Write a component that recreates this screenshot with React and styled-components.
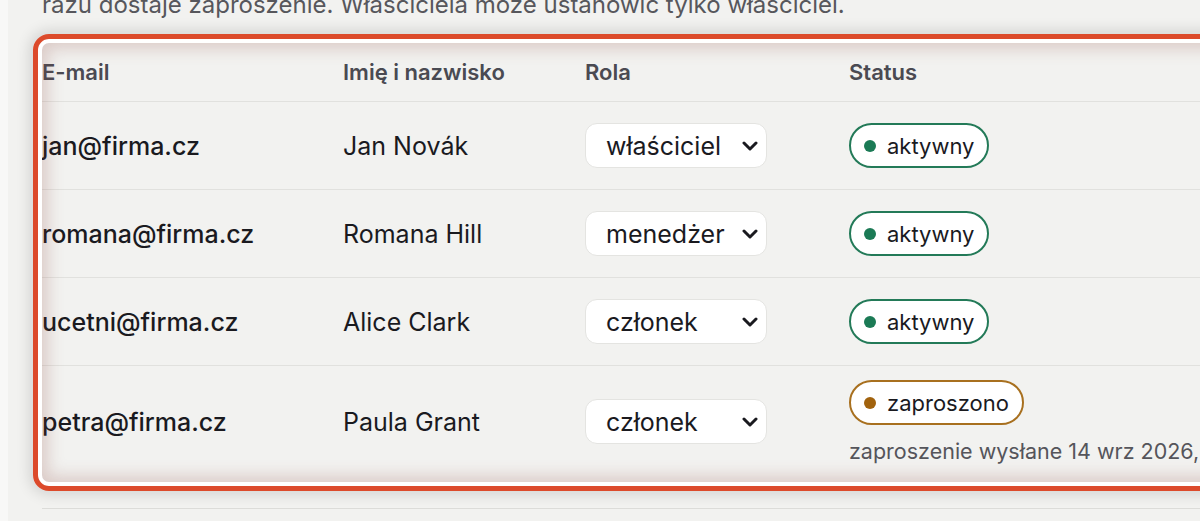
import React from "react";
import styled, { createGlobalStyle } from "styled-components";

const GlobalStyle = createGlobalStyle`
  * { box-sizing: border-box; }
  html, body { margin: 0; padding: 0; }
  body {
    background: #f8f8f7;
    font-family: Inter, "Noto Sans", "Liberation Sans", sans-serif;
    overflow: hidden;
  }
`;

const Page = styled.div`
  display: flex;
  height: 521px;
  padding-left: 8px;
`;

const Panel = styled.main`
  flex: 1;
  min-width: 0;
  background: #f2f2f0;
  padding-left: 34px;
  overflow: hidden;
`;

const Intro = styled.p`
  margin: -11px 0 0;
  font-size: 24px;
  line-height: 32px;
  color: #57575c;
  white-space: nowrap;
`;

const TableWrap = styled.div`
  position: relative;
  margin-top: 22px;
  width: 1250px;
`;

const Highlight = styled.div`
  position: absolute;
  top: -9px;
  left: -9px;
  right: -60px;
  bottom: -9px;
  border: 5px solid #dc4a2b;
  border-radius: 16px;
  pointer-events: none;
  box-shadow:
    inset 0 0 0 4px #ffffff,
    inset 0 0 16px 10px rgba(140, 70, 60, 0.22),
    0 0 14px 4px rgba(0, 0, 0, 0.12);
`;

const Table = styled.table`
  width: 100%;
  border-collapse: collapse;
  table-layout: fixed;
`;

const Th = styled.th`
  text-align: left;
  padding: 17px 0;
  font-size: 22px;
  line-height: 24px;
  font-weight: 600;
  color: #4a4a52;
  border-bottom: 1px solid #e1e1de;
`;

const Row = styled.tr`
  & + & td {
    border-top: 1px solid #e1e1de;
  }
`;

const Td = styled.td`
  padding: ${(p) => (p.$tall ? "14px 0 19px" : "21px 0 21px")};
  font-size: 25px;
  line-height: 28px;
  color: #1a1a1f;
  font-weight: ${(p) => (p.$strong ? 500 : 400)};
  vertical-align: ${(p) => (p.$top ? "top" : "middle")};
  white-space: nowrap;
`;

const SelectBox = styled.div`
  position: relative;
  width: 182px;
  height: 45px;
`;

const Select = styled.select`
  appearance: none;
  width: 100%;
  height: 100%;
  border: 1px solid #e4e4e1;
  border-radius: 12px;
  background: #ffffff;
  padding: 0 36px 0 20px;
  font-family: inherit;
  font-size: 25px;
  color: #1a1a1f;
`;

const Chevron = styled.svg`
  position: absolute;
  right: 9px;
  top: 50%;
  transform: translateY(-50%);
  pointer-events: none;
`;

const Badge = styled.span`
  display: inline-flex;
  align-items: center;
  gap: 11px;
  height: 45px;
  padding: 0 13px 0 13px;
  border: 2px solid ${(p) => p.$color};
  border-radius: 999px;
  background: #ffffff;
  font-size: 22px;
  color: #1a1a1f;
`;

const Dot = styled.span`
  width: 12px;
  height: 12px;
  border-radius: 50%;
  background: ${(p) => p.$color};
`;

const Note = styled.div`
  margin-top: 14px;
  font-size: 21.5px;
  line-height: 24px;
  color: #55555b;
`;

const Divider = styled.hr`
  margin: 26px 0 0;
  border: none;
  border-top: 1px solid #dcdcd9;
`;

const roles = ["właściciel", "menedżer", "członek"];

const members = [
  { email: "jan@firma.cz", name: "Jan Novák", role: "właściciel", status: "active" },
  { email: "romana@firma.cz", name: "Romana Hill", role: "menedżer", status: "active" },
  { email: "ucetni@firma.cz", name: "Alice Clark", role: "członek", status: "active" },
  {
    email: "petra@firma.cz",
    name: "Paula Grant",
    role: "członek",
    status: "invited",
    note: "zaproszenie wysłane 14 wrz 2026, 10:24",
  },
];

const statuses = {
  active: { label: "aktywny", border: "#237a58", dot: "#1b7a55" },
  invited: { label: "zaproszono", border: "#a8701f", dot: "#a1620d" },
};

const RoleSelect = ({ value }) => (
  <SelectBox>
    <Select defaultValue={value}>
      {roles.map((r) => (
        <option key={r}>{r}</option>
      ))}
    </Select>
    <Chevron width="16" height="10" viewBox="0 0 16 10">
      <path d="M2 2 L8 8 L14 2" fill="none" stroke="#1a1a1f" strokeWidth="3" strokeLinecap="round" strokeLinejoin="round" />
    </Chevron>
  </SelectBox>
);

export default function App() {
  return (
    <>
      <GlobalStyle />
      <Page>
        <Panel>
          <Intro>razu dostaje zaproszenie. Właściciela może ustanowić tylko właściciel.</Intro>
          <TableWrap>
            <Table>
              <colgroup>
                <col style={{ width: 301 }} />
                <col style={{ width: 242 }} />
                <col style={{ width: 264 }} />
                <col />
              </colgroup>
              <thead>
                <tr>
                  <Th>E-mail</Th>
                  <Th>Imię i nazwisko</Th>
                  <Th>Rola</Th>
                  <Th>Status</Th>
                </tr>
              </thead>
              <tbody>
                {members.map((m) => {
                  const s = statuses[m.status];
                  const tall = Boolean(m.note);
                  return (
                    <Row key={m.email}>
                      <Td $strong $tall={tall}>{m.email}</Td>
                      <Td $tall={tall}>{m.name}</Td>
                      <Td $tall={tall}>
                        <RoleSelect value={m.role} />
                      </Td>
                      <Td $tall={tall} $top={tall}>
                        <Badge $color={s.border}>
                          <Dot $color={s.dot} />
                          {s.label}
                        </Badge>
                        {m.note && <Note>{m.note}</Note>}
                      </Td>
                    </Row>
                  );
                })}
              </tbody>
            </Table>
            <Highlight />
          </TableWrap>
          <Divider />
        </Panel>
      </Page>
    </>
  );
}
